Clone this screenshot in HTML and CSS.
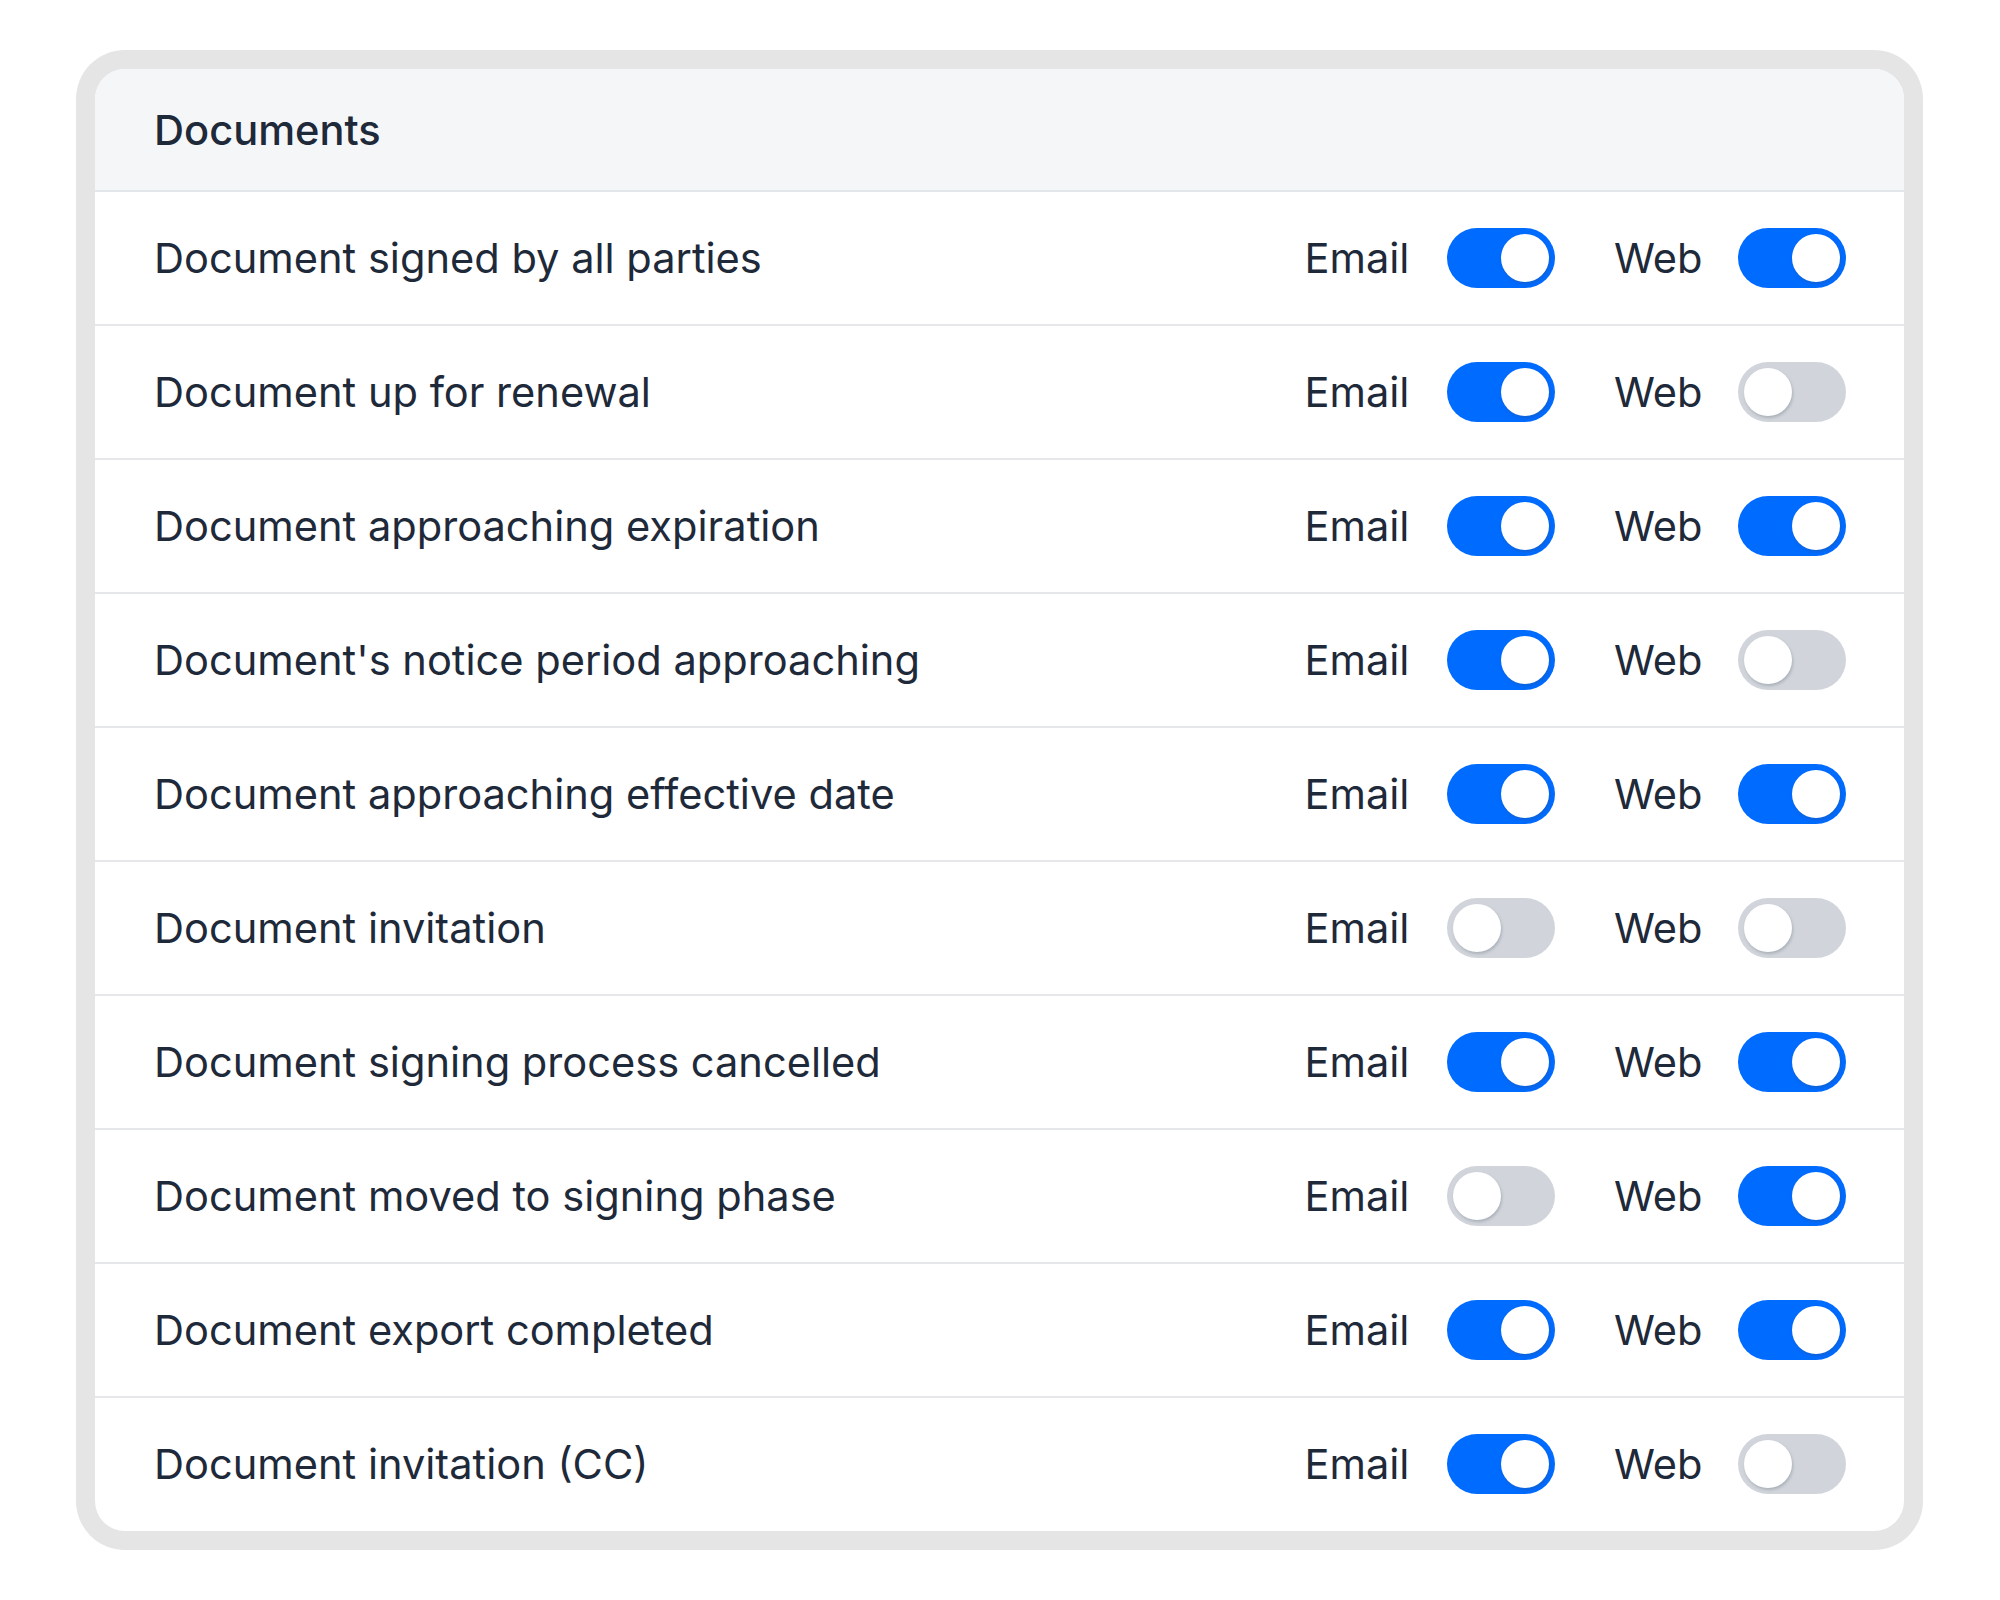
FILE: index.html
```html
<!DOCTYPE html>
<html lang="en">
<head>
<meta charset="utf-8">
<title>Notification settings – Documents</title>
<link rel="stylesheet" href="styles.css">
</head>
<body>
<div class="frame">
  <section class="card">
    <header class="card-head">Documents</header>
    <ul class="rows">
      <li class="row"><span class="label">Document signed by all parties</span>
        <div class="channels"><span class="ch">Email</span><span class="toggle on"></span><span class="ch web">Web</span><span class="toggle on"></span></div></li>
      <li class="row"><span class="label">Document up for renewal</span>
        <div class="channels"><span class="ch">Email</span><span class="toggle on"></span><span class="ch web">Web</span><span class="toggle"></span></div></li>
      <li class="row"><span class="label">Document approaching expiration</span>
        <div class="channels"><span class="ch">Email</span><span class="toggle on"></span><span class="ch web">Web</span><span class="toggle on"></span></div></li>
      <li class="row"><span class="label">Document's notice period approaching</span>
        <div class="channels"><span class="ch">Email</span><span class="toggle on"></span><span class="ch web">Web</span><span class="toggle"></span></div></li>
      <li class="row"><span class="label">Document approaching effective date</span>
        <div class="channels"><span class="ch">Email</span><span class="toggle on"></span><span class="ch web">Web</span><span class="toggle on"></span></div></li>
      <li class="row"><span class="label">Document invitation</span>
        <div class="channels"><span class="ch">Email</span><span class="toggle"></span><span class="ch web">Web</span><span class="toggle"></span></div></li>
      <li class="row"><span class="label">Document signing process cancelled</span>
        <div class="channels"><span class="ch">Email</span><span class="toggle on"></span><span class="ch web">Web</span><span class="toggle on"></span></div></li>
      <li class="row"><span class="label">Document moved to signing phase</span>
        <div class="channels"><span class="ch">Email</span><span class="toggle"></span><span class="ch web">Web</span><span class="toggle on"></span></div></li>
      <li class="row"><span class="label">Document export completed</span>
        <div class="channels"><span class="ch">Email</span><span class="toggle on"></span><span class="ch web">Web</span><span class="toggle on"></span></div></li>
      <li class="row"><span class="label">Document invitation (CC)</span>
        <div class="channels"><span class="ch">Email</span><span class="toggle on"></span><span class="ch web">Web</span><span class="toggle"></span></div></li>
    </ul>
  </section>
</div>
</body>
</html>
```

FILE: styles.css
```css
* { box-sizing: border-box; }

html, body {
  margin: 0;
  background: #ffffff;
}

body {
  font-family: Inter, "Noto Sans", "Liberation Sans", sans-serif;
  color: #1e2939;
}

.frame {
  margin: 50px 77px 0 76px;
  padding: 19px;
  background: #e5e5e6;
  border-radius: 49px;
}

.card {
  background: #ffffff;
  border-radius: 30px;
  overflow: hidden;
}

.card-head {
  background: #f5f6f8;
  padding: 31px 58px 30px 59px;
  font-size: 41.6px;
  line-height: 60px;
  font-weight: 500;
  border-bottom: 2px solid #e3e6eb;
}

.rows {
  list-style: none;
  margin: 0;
  padding: 0;
}

.row {
  display: flex;
  align-items: center;
  justify-content: space-between;
  padding: 36px 58px 36px 59px;
  border-bottom: 2px solid #e5e7eb;
  font-size: 41.6px;
  line-height: 60px;
}

.row:last-child { border-bottom: 0; padding-bottom: 37px; }

.channels {
  display: flex;
  align-items: center;
}

.ch { margin-right: 38px; }
.ch.web { margin-left: 58.5px; margin-right: 35.5px; }

.toggle {
  position: relative;
  width: 108px;
  height: 60px;
  border-radius: 30px;
  background: #d1d5db;
  flex: none;
}

.toggle::after {
  content: "";
  position: absolute;
  top: 6px;
  left: 6px;
  width: 48px;
  height: 48px;
  border-radius: 50%;
  background: #ffffff;
  box-shadow: 1px 2px 3px rgba(60, 70, 90, 0.25);
}

.toggle.on { background: #006bff; }
.toggle.on::after { left: 54px; }
```
